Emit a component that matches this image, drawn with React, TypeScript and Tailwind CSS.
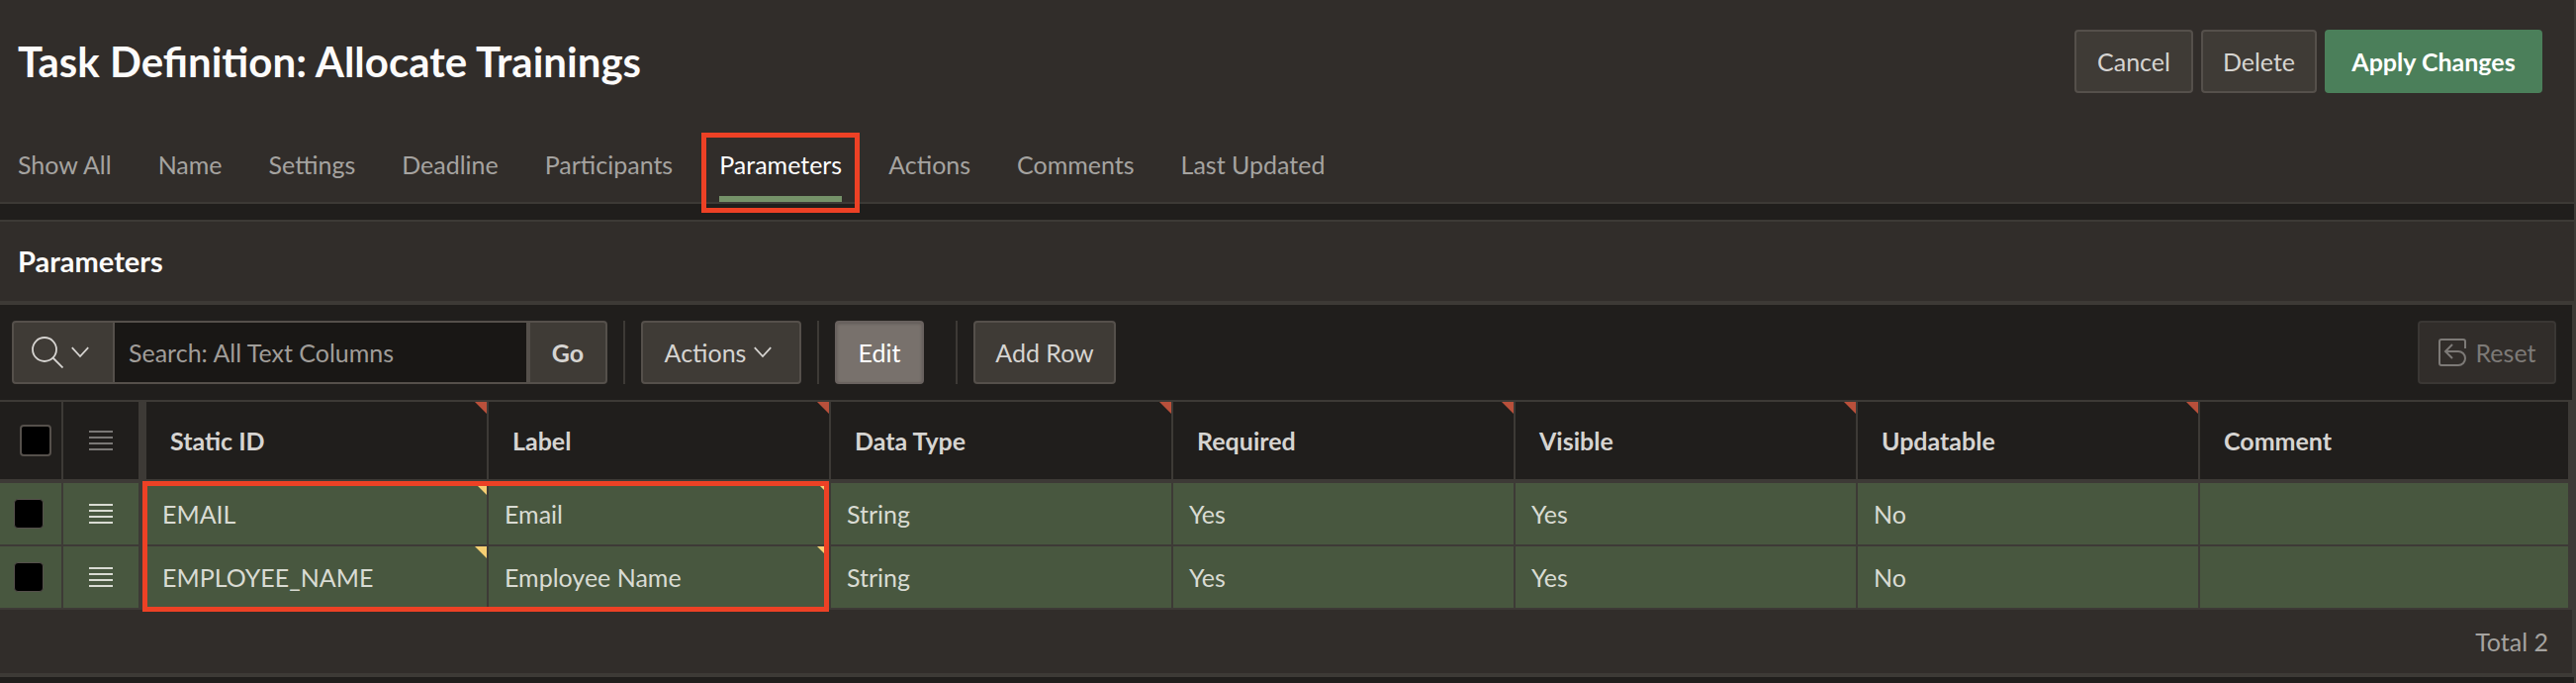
import type { ReactNode } from "react";

const TABS = [
  "Show All",
  "Name",
  "Settings",
  "Deadline",
  "Participants",
  "Parameters",
  "Actions",
  "Comments",
  "Last Updated",
];

const COLUMNS = [
  { label: "Static ID", required: true },
  { label: "Label", required: true },
  { label: "Data Type", required: true },
  { label: "Required", required: true },
  { label: "Visible", required: true },
  { label: "Updatable", required: true },
  { label: "Comment", required: false },
];

const ROWS = [
  ["EMAIL", "Email", "String", "Yes", "Yes", "No", ""],
  ["EMPLOYEE_NAME", "Employee Name", "String", "Yes", "Yes", "No", ""],
];

const buttonBase =
  "flex h-16 shrink-0 items-center justify-center rounded border-2 border-[#55504b] bg-[#3f3b36] text-[#d6d4d1]";

function Chevron() {
  return (
    <svg width="18" height="12" viewBox="0 0 18 12" fill="none" stroke="currentColor" strokeWidth="1.8" aria-hidden="true">
      <path d="M0.8 1.2 L9 10 L17.2 1.2" />
    </svg>
  );
}

function SearchIcon() {
  return (
    <svg width="32" height="32" viewBox="0 0 32 32" fill="none" stroke="currentColor" strokeWidth="1.8" aria-hidden="true">
      <circle cx="13" cy="13" r="12" />
      <path d="M21.5 21.5 L31.5 31.5" />
    </svg>
  );
}

function ResetIcon() {
  return (
    <svg width="28" height="28" viewBox="0 0 28 28" fill="none" stroke="currentColor" strokeWidth="2" aria-hidden="true">
      <path d="M27 10 V3 Q27 1 25 1 H3 Q1 1 1 3 V25 Q1 27 3 27 H20 A7 7 0 0 0 20 13 H7" />
      <path d="M14 6 L7 13 L14 20" />
    </svg>
  );
}

function GripIcon() {
  return (
    <svg width="24" height="20" viewBox="0 0 24 20" stroke="currentColor" strokeWidth="2" aria-hidden="true">
      <path d="M0 1 H24 M0 7 H24 M0 13 H24 M0 19 H24" />
    </svg>
  );
}

function Corner({ className }: { className: string }) {
  return (
    <svg className={`absolute top-0 right-0 ${className}`} width="12" height="12" viewBox="0 0 12 12" fill="currentColor" aria-hidden="true">
      <path d="M0 0 H12 V12 Z" />
    </svg>
  );
}

function Separator() {
  return <div className="h-16 w-0.5 shrink-0 bg-[#3d3a36]" />;
}

function ToolbarButton({ children, className }: { children: ReactNode; className: string }) {
  return (
    <button type="button" className={`${buttonBase} ${className}`}>
      {children}
    </button>
  );
}

export default function App() {
  return (
    <div className="min-h-screen border-r-2 border-[#3d3a36] bg-[#201e1c] font-[Lato,sans-serif] text-[25px] leading-8 text-[#d6d4d1]">
      <header className="border-b-2 border-[#3d3a36] bg-[#312d2a] pt-[30px]">
        <div className="flex items-center justify-between pr-8 pl-[18px]">
          <h1 className="text-[42px] leading-[48px] font-bold text-[#fcfbfa]">Task Definition: Allocate Trainings</h1>
          <div className="flex gap-2">
            <ToolbarButton className="w-[120px]">Cancel</ToolbarButton>
            <ToolbarButton className="w-[117px]">Delete</ToolbarButton>
            <button
              type="button"
              className="flex h-16 w-[220px] items-center justify-center rounded bg-[#4b7f5a] font-bold text-white"
            >
              Apply Changes
            </button>
          </div>
        </div>
        <nav className="mt-10 flex gap-[47px] pl-[18px]">
          {TABS.map((tab) =>
            tab === "Parameters" ? (
              <a
                key={tab}
                href="#parameters"
                aria-current="true"
                className="relative flex h-[70px] items-center border-b-6 border-[#759269] text-white"
              >
                {tab}
                <span className="absolute top-0 -right-[18px] -bottom-[17px] -left-[18px] border-[5px] border-[#ed4125]" />
              </a>
            ) : (
              <a key={tab} href="#" className="flex h-[70px] items-center border-b-6 border-transparent text-[#a5a3a0]">
                {tab}
              </a>
            ),
          )}
        </nav>
      </header>

      <section id="parameters" className="mt-4 border-t-2 border-[#3d3a36]">
        <h2 className="bg-[#312d2a] px-[18px] py-5 text-[29px] leading-10 font-bold text-[#fcfbfa]">Parameters</h2>
        <div className="border-y-4 border-r-2 border-[#3d3a36]">
          <div className="flex items-center justify-between py-4 pr-4 pl-3">
            <div className="flex items-center gap-4">
              <div className="flex">
                <button
                  type="button"
                  aria-label="Select columns to search"
                  className="flex h-16 w-[104px] items-center justify-center gap-2 rounded-l border-2 border-[#55504b] bg-[#3f3b36] pr-1.5"
                >
                  <SearchIcon />
                  <Chevron />
                </button>
                <input
                  type="search"
                  aria-label="Search"
                  placeholder="Search: All Text Columns"
                  className="h-16 w-[418px] border-y-2 border-r-2 border-[#55504b] bg-[#191715] px-3.5 placeholder:text-[#a09d99]"
                />
                <button
                  type="button"
                  className="flex h-16 w-20 items-center justify-center rounded-r border-2 border-[#55504b] bg-[#3f3b36] font-bold"
                >
                  Go
                </button>
              </div>
              <Separator />
              <ToolbarButton className="w-[162px] gap-2 pr-1.5">
                Actions
                <Chevron />
              </ToolbarButton>
              <Separator />
              <button
                type="button"
                aria-pressed="true"
                className="mr-4 flex h-16 w-[90px] items-center justify-center rounded border-2 border-[#69625f] bg-[#78716c] text-white shadow-[inset_0_1px_3px_#5f5955]"
              >
                Edit
              </button>
              <Separator />
              <ToolbarButton className="w-36">Add Row</ToolbarButton>
            </div>
            <button
              type="button"
              disabled
              className="flex h-16 w-[140px] items-center justify-center gap-2.5 rounded border-2 border-[#3a3734] bg-[#312d2a] text-[#7d7a77]"
            >
              <ResetIcon />
              Reset
            </button>
          </div>

          <div className="relative">
            <table className="w-full table-fixed border-separate border-spacing-0 border-t-2 border-r-4 border-[#3d3a36]">
              <colgroup>
                <col className="w-16" />
                <col className="w-[84px]" />
                <col className="w-[346px]" />
                <col className="w-[346px]" />
                <col className="w-[346px]" />
                <col className="w-[346px]" />
                <col className="w-[346px]" />
                <col className="w-[346px]" />
                <col />
              </colgroup>
              <thead>
                <tr className="h-[82px]">
                  <th className="border-r-2 border-b-4 border-[#3d3a36] pl-5">
                    <input
                      type="checkbox"
                      aria-label="Select all rows"
                      className="block size-8 appearance-none rounded border-2 border-[#55504b] bg-black"
                    />
                  </th>
                  <th className="border-r-8 border-b-4 border-[#3d3a36] text-[#7a7876]">
                    <div className="flex justify-center">
                      <GripIcon />
                    </div>
                  </th>
                  {COLUMNS.map((column) => (
                    <th
                      key={column.label}
                      scope="col"
                      className="relative border-r-2 border-b-4 border-[#3d3a36] pl-6 text-left font-bold last:border-r-0"
                    >
                      {column.label}
                      {column.required && <Corner className="text-[#b9503b]" />}
                    </th>
                  ))}
                </tr>
              </thead>
              <tbody className="bg-[#48573f] text-[#d9dbd3]">
                {ROWS.map((row) => (
                  <tr key={row[0]} className="h-16">
                    <td className="border-r-2 border-b-2 border-[#3d3a36] pl-3.5">
                      <input
                        type="checkbox"
                        aria-label={`Select ${row[0]}`}
                        className="block size-[30px] appearance-none rounded border border-[#55504b] bg-black"
                      />
                    </td>
                    <td className="border-r-8 border-b-2 border-[#3d3a36]">
                      <button type="button" aria-label={`Row actions for ${row[0]}`} className="mx-auto block">
                        <GripIcon />
                      </button>
                    </td>
                    {row.map((value, index) => (
                      <td
                        key={COLUMNS[index].label}
                        className="relative border-r-2 border-b-2 border-[#3d3a36] pl-4 last:border-r-0"
                      >
                        {value}
                        {index < 2 && <Corner className="text-[#f6cf73]" />}
                      </td>
                    ))}
                  </tr>
                ))}
              </tbody>
            </table>
            <div className="pointer-events-none absolute top-[82px] -bottom-0.5 left-36 w-[694px] border-[5px] border-[#ed4125]" />
          </div>

          <footer className="bg-[#312d2a] py-4 pr-6 text-right leading-8 text-[#a5a3a0]">Total 2</footer>
        </div>
      </section>
    </div>
  );
}
